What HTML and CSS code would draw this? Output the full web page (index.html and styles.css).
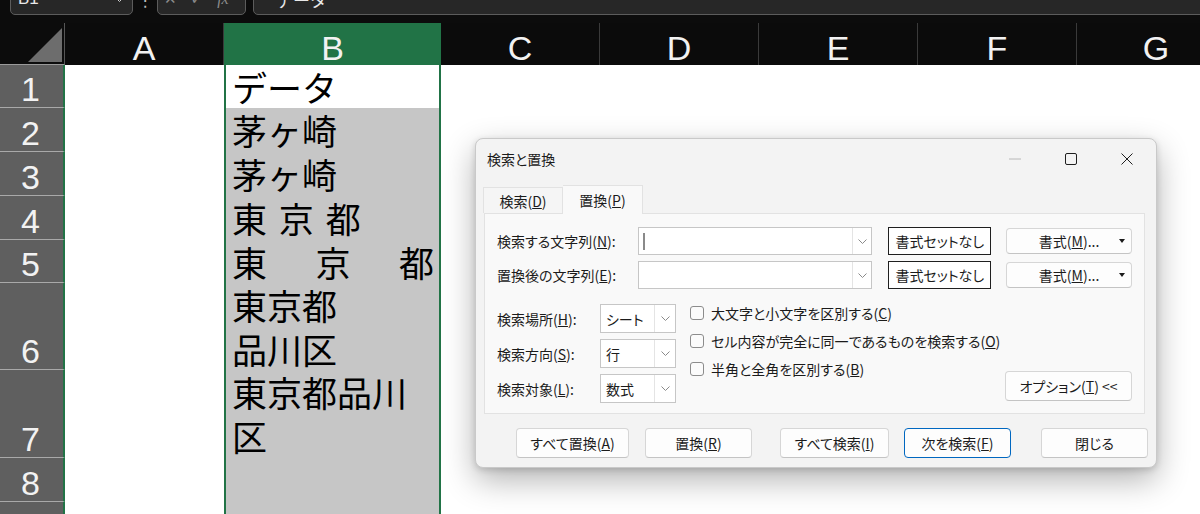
FILE: index.html
```html
<!DOCTYPE html>
<html lang="ja">

<head>
    <meta charset="UTF-8">
    <meta name="viewport" content="width=device-width, initial-scale=1.0">
    <title>検索と置換</title>
    <link rel="stylesheet" href="styles.css">
</head>

<body>
    <!-- Formula bar (only its lower edge is in view) -->
    <div class="topbar">
        <div class="namebox">
            <span>B1</span>
            <svg width="9" height="5" viewBox="0 0 9 5"><path d="M.5.5l4 4 4-4" fill="none" stroke="#cfcfcf" /></svg>
        </div>
        <span class="sep">⋮</span>
        <div class="fxbox">
            <span>✕</span>
            <span>✓</span>
            <span class="fx">fx</span>
        </div>
        <div class="formula">データ</div>
    </div>

    <div class="sheet">
        <!-- Row headers -->
        <div class="heads">
            <div class="corner">
                <svg width="34" height="34" viewBox="0 0 34 34"><path d="M34 0V34H0Z" fill="#6d6d6d" /></svg>
            </div>
            <div class="rh short">1</div>
            <div class="rh">2</div>
            <div class="rh">3</div>
            <div class="rh">4</div>
            <div class="rh short">5</div>
            <div class="rh tall">6</div>
            <div class="rh tall">7</div>
            <div class="rh">8</div>
            <div class="rh">9</div>
        </div>

        <div class="col">
            <div class="ch">A</div>
            <div class="body"></div>
        </div>

        <div class="col col-b">
            <div class="ch">B</div>
            <div class="body">
                <div class="cell short active">データ</div>
                <div class="cell">茅ヶ崎</div>
                <div class="cell">茅ヶ崎</div>
                <div class="cell spaced">東 京 都</div>
                <div class="cell short spread"><span>東</span><span>京</span><span>都</span></div>
                <div class="cell tall">東京都<br>品川区</div>
                <div class="cell tall">東京都品川<br>区</div>
            </div>
        </div>

        <div class="col">
            <div class="ch">C</div>
            <div class="body"></div>
        </div>
        <div class="col">
            <div class="ch">D</div>
            <div class="body"></div>
        </div>
        <div class="col">
            <div class="ch">E</div>
            <div class="body"></div>
        </div>
        <div class="col">
            <div class="ch">F</div>
            <div class="body"></div>
        </div>
        <div class="col">
            <div class="ch">G</div>
            <div class="body"></div>
        </div>
    </div>

    <!-- Find & Replace window -->
    <div class="dialog">
        <div class="titlebar">
            <span class="title">検索と置換</span>
            <div class="caption">
                <span class="cap-btn">
                    <svg width="12" height="2" viewBox="0 0 12 2"><path d="M0 1h12" stroke="#b8b8b8" /></svg>
                </span>
                <span class="cap-btn">
                    <svg width="12" height="12" viewBox="0 0 12 12"><rect x=".5" y=".5" width="11" height="11" rx="1.5" fill="none" stroke="#1f1f1f" /></svg>
                </span>
                <span class="cap-btn">
                    <svg width="12" height="12" viewBox="0 0 12 12"><path d="M.5.5l11 11M11.5.5l-11 11" fill="none" stroke="#1f1f1f" /></svg>
                </span>
            </div>
        </div>

        <div class="tabs">
            <span class="tab">検索(<u>D</u>)</span>
            <span class="tab active">置換(<u>P</u>)</span>
        </div>

        <div class="panel">
            <div class="field-row">
                <label class="field-label">検索する文字列(<u>N</u>):</label>
                <div class="combo">
                    <span class="caret"></span>
                    <span class="drop"><svg width="9" height="5" viewBox="0 0 9 5"><path d="M.5.5l4 4 4-4" fill="none" stroke="#8a8a8a" /></svg></span>
                </div>
                <button class="fmt-none">書式セットなし</button>
                <button class="btn fmt"><span>書式(<u>M</u>)...</span><i class="arrow"></i></button>
            </div>
            <div class="field-row">
                <label class="field-label">置換後の文字列(<u>E</u>):</label>
                <div class="combo">
                    <span class="drop"><svg width="9" height="5" viewBox="0 0 9 5"><path d="M.5.5l4 4 4-4" fill="none" stroke="#8a8a8a" /></svg></span>
                </div>
                <button class="fmt-none">書式セットなし</button>
                <button class="btn fmt"><span>書式(<u>M</u>)...</span><i class="arrow"></i></button>
            </div>

            <div class="options">
                <div class="selects">
                    <div class="select-row">
                        <label>検索場所(<u>H</u>):</label>
                        <div class="select"><span>シート</span><span class="drop"><svg width="9" height="5" viewBox="0 0 9 5"><path d="M.5.5l4 4 4-4" fill="none" stroke="#8a8a8a" /></svg></span></div>
                    </div>
                    <div class="select-row">
                        <label>検索方向(<u>S</u>):</label>
                        <div class="select"><span>行</span><span class="drop"><svg width="9" height="5" viewBox="0 0 9 5"><path d="M.5.5l4 4 4-4" fill="none" stroke="#8a8a8a" /></svg></span></div>
                    </div>
                    <div class="select-row">
                        <label>検索対象(<u>L</u>):</label>
                        <div class="select"><span>数式</span><span class="drop"><svg width="9" height="5" viewBox="0 0 9 5"><path d="M.5.5l4 4 4-4" fill="none" stroke="#8a8a8a" /></svg></span></div>
                    </div>
                </div>

                <div class="checks">
                    <label class="check"><span class="box"></span><span>大文字と小文字を区別する(<u>C</u>)</span></label>
                    <label class="check"><span class="box"></span><span>セル内容が完全に同一であるものを検索する(<u>O</u>)</span></label>
                    <label class="check"><span class="box"></span><span>半角と全角を区別する(<u>B</u>)</span></label>
                </div>

                <button class="btn opt-toggle">オプション(<u>T</u>) &lt;&lt;</button>
            </div>
        </div>

        <div class="actions">
            <button class="btn replace-all">すべて置換(<u>A</u>)</button>
            <button class="btn replace">置換(<u>R</u>)</button>
            <button class="btn find-all">すべて検索(<u>I</u>)</button>
            <button class="btn find-next">次を検索(<u>F</u>)</button>
            <button class="btn close">閉じる</button>
        </div>
    </div>
</body>

</html>
```

FILE: styles.css
```css
* {
    margin: 0;
    padding: 0;
    box-sizing: border-box;
}

body {
    position: relative;
    width: 1200px;
    height: 514px;
    overflow: hidden;
    background-color: #0c0c0c;
    font-family: "Noto Sans CJK JP", sans-serif;
}

/* ---------- formula bar ---------- */

.topbar {
    display: flex;
    align-items: flex-end;
    height: 23px;
    padding: 0 0 8px 10px;
    overflow: hidden;
}

.namebox,
.fxbox,
.formula {
    display: flex;
    align-items: center;
    height: 32px;
    background-color: #272727;
    border: 1px solid #5c5c5c;
    border-radius: 5px;
    color: #e8e8e8;
}

.namebox {
    width: 123px;
    justify-content: space-between;
    padding: 0 8px 0 7px;
    font: 17px "Liberation Sans", sans-serif;
}

.sep {
    width: 24px;
    text-align: center;
    color: #bdbdbd;
    font: 17px "DejaVu Sans", sans-serif;
    line-height: 30px;
}

.fxbox {
    width: 89px;
    gap: 14px;
    padding-left: 6px;
    color: #8c8c8c;
    font: 15px "DejaVu Sans", sans-serif;
}

.fxbox .fx {
    font: italic 16px "Liberation Serif", serif;
}

.formula {
    flex: 1;
    margin: 0 -10px 0 7px;
    padding-left: 22px;
    font-size: 17px;
}

/* ---------- sheet ---------- */

.sheet {
    display: flex;
    height: 491px;
}

.heads {
    width: 65px;
    flex-shrink: 0;
}

.corner {
    display: flex;
    align-items: flex-end;
    justify-content: flex-end;
    height: 42px;
    padding: 0 2px 2px 0;
    border-right: 1px solid #565656;
    border-bottom: 1px solid #9a9a9a;
}

.rh,
.ch {
    font: 34px "Liberation Sans Narrow", "Liberation Sans", sans-serif;
    line-height: 34px;
    color: #f2f2f2;
}

.rh {
    display: flex;
    align-items: flex-end;
    justify-content: center;
    height: 44px;
    padding: 0 2px 1px 0;
    background-color: #5f5f5f;
    border-right: 2px solid #217346;
    border-bottom: 1px solid #a9a9a9;
}

.short {
    height: 43px;
}

.tall {
    height: 88px;
}

.rh.tall:nth-child(7) {
    height: 87px;
}

.col {
    display: flex;
    flex-direction: column;
    width: 159px;
    flex-shrink: 0;
}

.ch {
    display: flex;
    align-items: flex-end;
    justify-content: center;
    height: 42px;
    background-color: #0b0b0b;
    border-right: 1px solid #3a3a3a;
}

.col .body {
    flex: 1;
    background-color: #fff;
}

.col-b {
    width: 217px;
}

.col-b .ch {
    background-color: #217346;
    border-right: none;
}

.col-b .body {
    background-color: #c6c6c6;
    border-left: 2px solid #217346;
    border-right: 2px solid #217346;
}

.cell {
    height: 44px;
    padding: 0 6px;
    font-size: 35px;
    line-height: 44px;
    color: #000;
    white-space: nowrap;
}

.cell.short {
    height: 43px;
}

.cell.tall {
    height: 88px;
}

.cell.tall:nth-child(6) {
    height: 87px;
}

.cell.active {
    background-color: #fff;
}

.cell.spaced {
    word-spacing: 4px;
}

.cell.spread {
    display: flex;
    justify-content: space-between;
    padding-right: 5px;
}

/* ---------- find & replace window ---------- */

.dialog {
    position: absolute;
    left: 475px;
    top: 138px;
    width: 682px;
    height: 330px;
    background-color: #f3f3f3;
    border: 1px solid #c9c9c9;
    border-radius: 8px;
    box-shadow: 0 12px 32px rgba(0, 0, 0, 0.3), 0 2px 6px rgba(0, 0, 0, 0.15);
    font-size: 14px;
    font-feature-settings: "palt";
    color: #1b1b1b;
}

.titlebar {
    display: flex;
    align-items: center;
    height: 39px;
    padding-left: 11px;
}

.caption {
    display: flex;
    margin-left: auto;
    margin-right: 1px;
}

.cap-btn {
    display: flex;
    align-items: center;
    justify-content: center;
    width: 56px;
    height: 38px;
}

.tabs {
    display: flex;
    align-items: flex-end;
    height: 28px;
    margin-top: 7px;
    padding-left: 7px;
}

.tab {
    display: flex;
    align-items: center;
    justify-content: center;
    width: 80px;
    height: 26px;
    background-color: #f5f5f5;
    border: 1px solid #e2e2e2;
    border-bottom: none;
}

.tab.active {
    position: relative;
    z-index: 1;
    height: 29px;
    margin-bottom: -1px;
    background-color: #f9f9f9;
    border-left: none;
}

.panel {
    height: 201px;
    margin: 0 11px 0 8px;
    padding: 13px 12px 10px 12px;
    background-color: #f9f9f9;
    border: 1px solid #e2e2e2;
}

.field-row {
    display: flex;
    align-items: center;
    height: 28px;
}

.field-row + .field-row {
    margin-top: 6px;
}

.field-label {
    width: 141px;
}

.combo,
.select {
    display: flex;
    align-items: center;
    height: 28px;
    background-color: #fff;
    border: 1px solid #c6c6c6;
}

.combo {
    width: 235px;
}

.caret {
    width: 2px;
    height: 17px;
    margin-left: 4px;
    background-color: #8a8a8a;
}

.drop {
    display: flex;
    align-items: center;
    justify-content: center;
    align-self: stretch;
    width: 19px;
    margin-left: auto;
    border-left: 1px solid #e4e4e4;
}

button {
    font-family: inherit;
    font-size: 14px;
    font-feature-settings: "palt";
    color: #1b1b1b;
}

.btn {
    height: 30px;
    background-color: #fdfdfd;
    border: 1px solid #d6d6d6;
    border-bottom-color: #c4c4c4;
    border-radius: 4px;
}

.fmt-none {
    width: 103px;
    height: 28px;
    margin-left: 16px;
    background-color: #fff;
    border: 1px solid #1f1f1f;
}

.fmt {
    display: flex;
    align-items: center;
    width: 126px;
    height: 26px;
    margin-left: 15px;
    padding: 0 6px 0 12px;
}

.fmt span {
    flex: 1;
    text-align: center;
}

.arrow {
    width: 0;
    height: 0;
    border-left: 3.5px solid transparent;
    border-right: 3.5px solid transparent;
    border-top: 4px solid #1b1b1b;
}

.options {
    display: flex;
    margin-top: 15px;
}

.selects {
    display: flex;
    flex-direction: column;
    gap: 6px;
}

.select-row {
    display: flex;
    align-items: center;
}

.select-row label {
    width: 103px;
}

.select {
    width: 76px;
    height: 29px;
    padding-left: 5px;
}

.select .drop {
    width: 21px;
}

.checks {
    display: flex;
    flex-direction: column;
    margin: -5px 0 0 14px;
}

.check {
    display: flex;
    align-items: center;
    gap: 7px;
    height: 28px;
}

.box {
    width: 14px;
    height: 14px;
    background-color: #fbfbfb;
    border: 1px solid #8c8c8c;
    border-radius: 3px;
}

.opt-toggle {
    align-self: flex-end;
    width: 127px;
    margin: 0 0 2px auto;
}

.actions {
    display: flex;
    padding: 14px 0 0 40px;
}

.replace-all {
    width: 113px;
}

.replace {
    width: 107px;
    margin-left: 16px;
}

.find-all {
    width: 109px;
    margin-left: 28px;
}

.find-next {
    width: 107px;
    margin-left: 15px;
    border-color: #0067c0;
}

.close {
    width: 107px;
    margin-left: 30px;
}
```
